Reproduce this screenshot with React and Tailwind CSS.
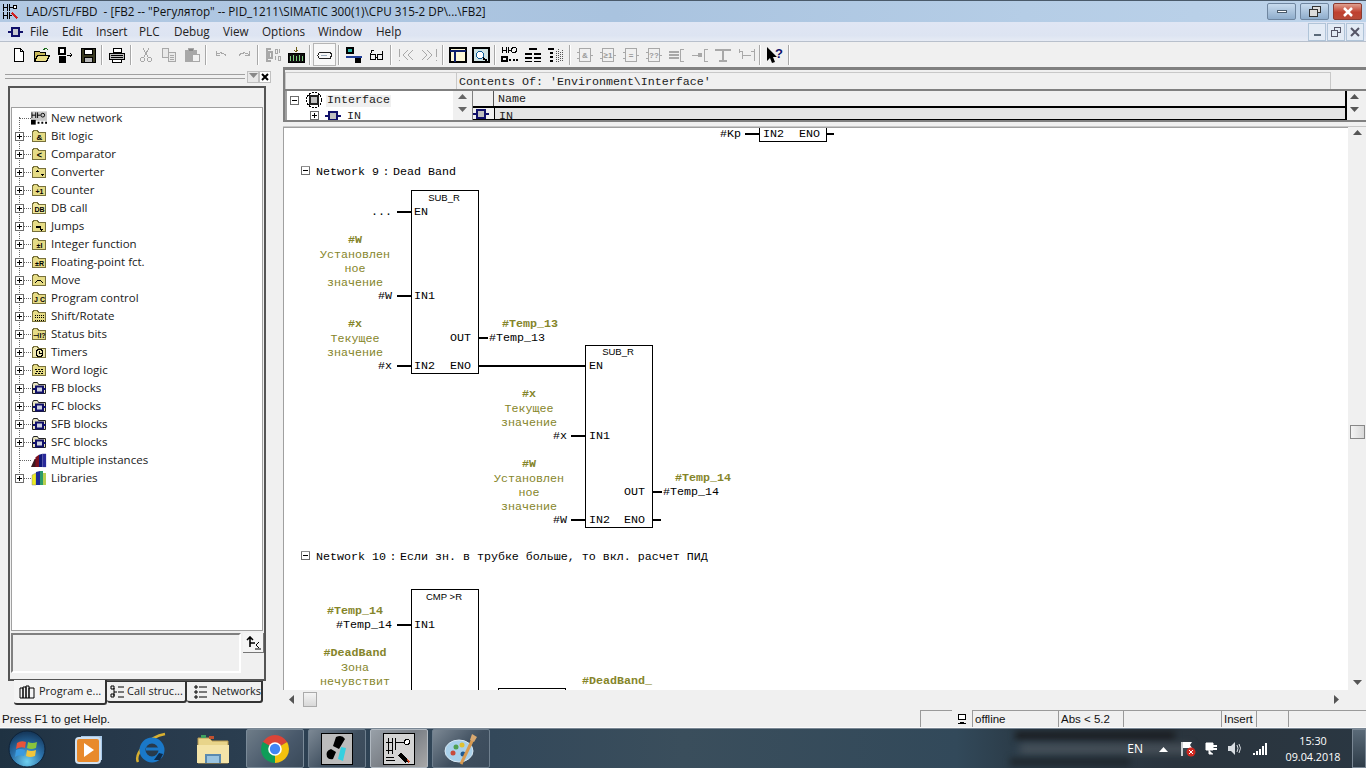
import clsx from 'clsx'

// --- small shared bits ---------------------------------------------------

const Plus = ({ minus }) => (
  <svg width="9" height="9" viewBox="0 0 9 9" className="relative shrink-0" shapeRendering="crispEdges">
    <rect x="0.5" y="0.5" width="8" height="8" fill="#fff" stroke="#6d6d6d" />
    <path d="M2 4.5h5" stroke="#000" />
    {!minus && <path d="M4.5 2v5" stroke="#000" />}
  </svg>
)

const Arrow = ({ dir, color = '#555' }) => {
  const d = {
    up: 'M0 6L4.5 1L9 6Z',
    down: 'M0 1L4.5 6L9 1Z',
    left: 'M6 0L1 4.5L6 9Z',
    right: 'M1 0L6 4.5L1 9Z',
  }[dir]
  return (
    <svg width="9" height="9" viewBox="0 0 9 9">
      <path d={d} fill={color} />
    </svg>
  )
}

// --- toolbar icons -------------------------------------------------------

const Ic = ({ children, dim }) => (
  <svg width="18" height="16" viewBox="0 0 18 16" fill="none" stroke={dim ? '#a8a8a8' : '#000'} strokeWidth="1" shapeRendering="crispEdges">
    {children}
  </svg>
)

const BoxGlyph = ({ label }) => (
  <Ic dim>
    <rect x="3.5" y="1.5" width="11" height="13" fill="#f0f0f0" />
    <path d="M1 5h2M1 11h2M15 8h2" />
    <text x="9" y="11" textAnchor="middle" fontSize="8" fill="#9a9a9a" stroke="none" fontFamily="Liberation Sans, sans-serif" fontWeight="700">{label}</text>
  </Ic>
)

const LadderGlyph = () => (
  <Ic>
    <path d="M1 3h4M1 0v6M5 0v6M7 0v6M7 3h3" />
    <circle cx="13" cy="3" r="2.5" />
    <path d="M1 10h5v4H1zM8 13h2M12 13h2M15 13h2" strokeWidth="2" />
  </Ic>
)

const TOOLBAR = [
  [
    <Ic key="new"><path d="M4.5 1.5h6l3 3v10h-9zM10.5 1.5v3h3" fill="#fff" /></Ic>,
    <Ic key="open"><path d="M1.5 14.5v-10h5l1 1h5v9z" fill="#c9b95a" /><path d="M1.5 14.5l3-6h12l-3 6z" fill="#e9dc85" /><path d="M10 3l3-2 2 2" stroke="#1a6a1a" /></Ic>,
    <Ic key="nodes"><rect x="3" y="1" width="6" height="6" fill="#fff" strokeWidth="2" /><rect x="3" y="9" width="6" height="6" fill="#000" /><path d="M11 8h5M14 6l2 2-2 2" /></Ic>,
    <Ic key="save"><rect x="2" y="1" width="14" height="14" fill="#3a3a20" /><rect x="5" y="2" width="8" height="5" fill="#fff" /><rect x="5" y="10" width="8" height="5" fill="#b9b9b9" /></Ic>,
  ],
  [
    <Ic key="print"><path d="M5 1.5h8v4H5z" fill="#fff" /><path d="M1.5 6.5h15v6h-15z" fill="#bdbdbd" /><path d="M3 8h12M3 10h12" /><path d="M4.5 12.5h9v3h-9z" fill="#fff" /></Ic>,
  ],
  [
    <Ic key="cut" dim><path d="M6 1l5 9M12 1l-5 9" /><circle cx="5.5" cy="12.5" r="2" /><circle cx="12.5" cy="12.5" r="2" /></Ic>,
    <Ic key="copy" dim><path d="M2.5 1.5h6v9h-6zM8.5 5.5h7v9h-7z" fill="#e9e9e9" /><path d="M10 8h4M10 10h4M10 12h4" /></Ic>,
    <Ic key="paste" dim><path d="M2 3h11v11H2z" fill="#a8a8a8" /><path d="M5 1h5v3H5z" fill="#888" /><path d="M9.5 7.5h7v7h-7z" fill="#f2f2f2" /></Ic>,
  ],
  [
    <Ic key="undo" dim><path d="M4 4v4h4M4 8c2-3 8-3 10 1" /></Ic>,
    <Ic key="redo" dim><path d="M14 4v4h-4M14 8c-2-3-8-3-10 1" /></Ic>,
  ],
  [
    <Ic key="compile" dim><path d="M7 2H3v12h4M5 5h3v6H5z" strokeWidth="1.5" /><path d="M11 2h2v4h-2zM15 2v4M11 9v4M14 9h2v4h-2z" /></Ic>,
    <Ic key="download"><path d="M9 0v5M7 3l2 2 2-2" stroke="#6b5a12" /><rect x="1" y="6" width="16" height="9" fill="#101010" /><path d="M3 9v5M6 8v6M9 9v5M12 8v6M15 9v5" stroke="#7fd07f" /></Ic>,
  ],
  [
    <Ic key="monitor"><path d="M3.5 5.5h11l1 2-1 4h-11l-2-3z" fill="#f7f7f7" stroke="#222" /><path d="M5 8h6" stroke="#9ab" /></Ic>,
  ],
  [
    <Ic key="tree"><rect x="2" y="1" width="6" height="5" fill="#2cb8a8" strokeWidth="1.5" /><path d="M1 10h16" strokeWidth="2" stroke="#22409a" /><rect x="10" y="11" width="5" height="4" fill="#000" /></Ic>,
    <Ic key="glasses"><circle cx="5" cy="10" r="3" /><circle cx="12" cy="10" r="3" /><path d="M8 10h1M2 9l2-6h2M14 8l1-4" /></Ic>,
  ],
  [
    <Ic key="prev" dim><path d="M2 2v8M2 13v1M11 3L6 8l5 5M16 3l-5 5 5 5" /></Ic>,
    <Ic key="next" dim><path d="M16 2v8M16 13v1M7 3l5 5-5 5M2 3l5 5-5 5" /></Ic>,
  ],
  [
    <Ic key="pane"><rect x="1" y="1" width="16" height="14" fill="#fdf8d8" strokeWidth="2" /><path d="M1 4h16M6 4v11" strokeWidth="2" stroke="#10206a" /></Ic>,
    <Ic key="zoom"><rect x="1" y="1" width="16" height="14" fill="#cfe3e3" strokeWidth="1.5" /><circle cx="8" cy="8" r="3.5" fill="#fff" stroke="#10609a" /><path d="M11 11l4 3" strokeWidth="2" /></Ic>,
  ],
  [
    <LadderGlyph key="net" />,
    <Ic key="ov1"><path d="M5 1h8v2H5zM1 6h7v2H1zM1 10h7v2H1zM1 14h7v1H1zM10 6h7v2h-7zM10 10h7v2h-7zM10 14h7v1h-7z" fill="#000" stroke="none" /></Ic>,
    <Ic key="ov2"><path d="M1 1h6v2H1zM3 5h3v2H3zM3 9h3v2H3zM3 13h3v2H3z" fill="#000" stroke="none" /><path d="M9 4v11M11 2v13M13 5v10M15 3v12" stroke="#555" strokeDasharray="1 1" /></Ic>,
  ],
  [
    <BoxGlyph key="and" label="&" />,
    <BoxGlyph key="or" label="≥1" />,
    <BoxGlyph key="eq" label="=" />,
    <BoxGlyph key="q" label="??" />,
    <Ic key="c1" dim><path d="M1 5h10M1 8h10M1 11h10" strokeWidth="1.5" /><path d="M16 2h-4v12h4" /></Ic>,
    <Ic key="c2" dim><path d="M1 8h7" /><circle cx="9" cy="8" r="2" fill="#a8a8a8" /><path d="M17 2h-4v12h4" /></Ic>,
    <Ic key="c3" dim><path d="M1 3h16M9 3v11M5 14h8" strokeWidth="2" /></Ic>,
    <Ic key="c4" dim><path d="M2 2v4M2 4h3v8M5 8h9M14 4h3M17 2v12" /></Ic>,
  ],
  [
    <svg key="help" width="18" height="16" viewBox="0 0 18 16">
      <path d="M1 0v14l3-3 2 5 3-1-2-5h4z" fill="#000" />
      <text x="13" y="11" fontSize="13" fontWeight="700" fill="#10106a" textAnchor="middle" fontFamily="Liberation Sans, sans-serif">?</text>
    </svg>,
  ],
]

// --- tree icons ----------------------------------------------------------

const Folder = ({ children, fill = '#e6dc86' }) => (
  <svg width="16" height="14" viewBox="0 0 16 14" className="shrink-0" shapeRendering="crispEdges">
    <path d="M1.5 3.5v9h13v-9h-7l-1-2h-4z" fill={fill} stroke="#77703a" />
    {children}
  </svg>
)

const Lbl = ({ t, size = 7 }) => (
  <text x="8.5" y="11" textAnchor="middle" fontSize={size} fontWeight="700" fill="#000" fontFamily="Liberation Sans, sans-serif">{t}</text>
)

const BlockGlyph = () => (
  <>
    <path d="M1.5 3.5v9h13v-9h-7l-1-2h-4z" fill="#e8e4c0" stroke="#222" />
    <rect x="5" y="5.5" width="7" height="6" fill="#cfd2dd" stroke="#10106a" strokeWidth="2" />
    <path d="M2 8h3M12 8h3" stroke="#10106a" strokeWidth="2" />
  </>
)

const NetIcon = () => (
  <svg width="16" height="14" viewBox="0 0 17 14" className="shrink-0">
    <rect width="17" height="10" fill="#c9c9c9" />
    <path d="M1 4h4M1 1v6M5 1v6M7 1v6M7 4h3" stroke="#000" fill="none" />
    <circle cx="12.5" cy="4" r="2" fill="none" stroke="#000" />
    <rect x="0" y="9" width="5" height="5" fill="#000" />
    <path d="M7 12h2M11 12h2M15 12h2" stroke="#000" strokeWidth="2" />
  </svg>
)

const BooksIcon = () => (
  <svg width="16" height="16" viewBox="0 0 18 16" className="shrink-0">
    <path d="M0 16l4-9h3v9z" fill="#3a1a20" />
    <path d="M5 16V5l4-3v14z" fill="#7a1020" />
    <path d="M9 16V2l4-1v15z" fill="#10187a" />
    <path d="M13 16V1h4v15z" fill="#2a2a9a" />
  </svg>
)

const LibIcon = () => (
  <svg width="16" height="16" viewBox="0 0 16 16" className="shrink-0">
    <path d="M1 15V5l4-2v12z" fill="#ecec20" stroke="#888" strokeWidth="0.5" />
    <path d="M5 15V2l4-1v14z" fill="#1a2a9a" />
    <path d="M9 15V1h3v14z" fill="#2a9a6a" />
    <path d="M12 15V3h3v12z" fill="#b8d050" />
  </svg>
)

const TREE = [
  { label: 'New network', icon: <NetIcon />, leaf: true },
  { label: 'Bit logic', icon: <Folder><Lbl t="&" size={8} /></Folder> },
  { label: 'Comparator', icon: <Folder><Lbl t="<" size={9} /></Folder> },
  { label: 'Converter', icon: <Folder><path d="M4 7l2-2 2 2zM9 9h4l-2 2z" /></Folder> },
  { label: 'Counter', icon: <Folder><Lbl t="+1" /></Folder> },
  { label: 'DB call', icon: <Folder fill="#f0e9a0"><Lbl t="DB" /></Folder> },
  { label: 'Jumps', icon: <Folder><path d="M5 7h5v3h2l-2 2-2-2h1V9H5z" /></Folder> },
  { label: 'Integer function', icon: <Folder><Lbl t="±I" /></Folder> },
  { label: 'Floating-point fct.', icon: <Folder><Lbl t="±R" /></Folder> },
  { label: 'Move', icon: <Folder><path d="M4 10q4-5 8 0" fill="none" stroke="#000" /></Folder> },
  { label: 'Program control', icon: <Folder><Lbl t="J C" /></Folder> },
  { label: 'Shift/Rotate', icon: <Folder><path d="M4 6h9M4 8h9M4 11h9" stroke="#000" strokeDasharray="1 1" /></Folder> },
  { label: 'Status bits', icon: <Folder><Lbl t="⊣I?" /></Folder> },
  { label: 'Timers', icon: <Folder fill="#efe8b0"><circle cx="8.5" cy="8" r="3.5" fill="none" stroke="#000" /><path d="M8.5 6v2h2" stroke="#000" fill="none" /></Folder> },
  { label: 'Word logic', icon: <Folder><path d="M4 6h9M5 8h7M4 10h9" stroke="#000" strokeDasharray="2 1" /></Folder> },
  { label: 'FB blocks', icon: <svg width="16" height="14" viewBox="0 0 16 14" className="shrink-0"><BlockGlyph /></svg> },
  { label: 'FC blocks', icon: <svg width="16" height="14" viewBox="0 0 16 14" className="shrink-0"><BlockGlyph /></svg> },
  { label: 'SFB blocks', icon: <svg width="16" height="14" viewBox="0 0 16 14" className="shrink-0"><BlockGlyph /></svg> },
  { label: 'SFC blocks', icon: <svg width="16" height="14" viewBox="0 0 16 14" className="shrink-0"><BlockGlyph /></svg> },
  { label: 'Multiple instances', icon: <BooksIcon />, leaf: true },
  { label: 'Libraries', icon: <LibIcon /> },
]

const MENU = [
  { t: 'File', w: 'w-[32px]' },
  { t: 'Edit', w: 'w-[34px]' },
  { t: 'Insert', w: 'w-[43px]' },
  { t: 'PLC', w: 'w-[35px]' },
  { t: 'Debug', w: 'w-[49px]' },
  { t: 'View', w: 'w-[39px]' },
  { t: 'Options', w: 'w-[56px]' },
  { t: 'Window', w: 'w-[58px]' },
  { t: 'Help', w: 'w-[40px]' },
]

// --- diagram data, screen coordinates ------------------------------------

const ORIGIN_X = 284
const ORIGIN_Y = 128

const BOXES = [
  [759, 120, 67, 21],
  [411, 190, 67, 183],
  [585, 345, 67, 182],
  [411, 589, 67, 160],
  [498, 688, 67, 60],
]

const WIRES = [
  [745, 134, 759], [826, 134, 834],
  [397, 212, 411], [397, 296, 411], [397, 366, 411],
  [478, 338, 488], [478, 366, 585],
  [571, 436, 585], [571, 520, 585],
  [652, 492, 662], [652, 520, 661],
  [397, 625, 411],
]

// x, y (middle), anchor, kind, text
const LABELS = [
  [741, 134, 'r', 'pin', '#Kp'], [763, 134, 'l', 'pin', 'IN2'], [799, 134, 'l', 'pin', 'ENO'],
  [444, 198, 'c', 'title', 'SUB_R'],
  [392, 212, 'r', 'pin', '...'], [414, 212, 'l', 'pin', 'EN'],
  [355, 240, 'c', 'sym', '#W'], [355, 254, 'c', 'com', 'Установлен'], [355, 268, 'c', 'com', 'ное'], [355, 282, 'c', 'com', 'значение'],
  [392, 296, 'r', 'pin', '#W'], [414, 296, 'l', 'pin', 'IN1'],
  [355, 324, 'c', 'sym', '#x'], [355, 338, 'c', 'com', 'Текущее'], [355, 352, 'c', 'com', 'значение'],
  [392, 366, 'r', 'pin', '#x'], [414, 366, 'l', 'pin', 'IN2'],
  [450, 338, 'l', 'pin', 'OUT'], [450, 366, 'l', 'pin', 'ENO'],
  [489, 338, 'l', 'pin', '#Temp_13'], [502, 324, 'l', 'sym', '#Temp_13'],
  [618, 352, 'c', 'title', 'SUB_R'], [589, 366, 'l', 'pin', 'EN'],
  [529, 394, 'c', 'sym', '#x'], [529, 408, 'c', 'com', 'Текущее'], [529, 422, 'c', 'com', 'значение'],
  [567, 436, 'r', 'pin', '#x'], [589, 436, 'l', 'pin', 'IN1'],
  [529, 464, 'c', 'sym', '#W'], [529, 478, 'c', 'com', 'Установлен'], [529, 492, 'c', 'com', 'ное'], [529, 506, 'c', 'com', 'значение'],
  [567, 520, 'r', 'pin', '#W'], [589, 520, 'l', 'pin', 'IN2'],
  [624, 492, 'l', 'pin', 'OUT'], [624, 520, 'l', 'pin', 'ENO'],
  [663, 492, 'l', 'pin', '#Temp_14'], [675, 478, 'l', 'sym', '#Temp_14'],
  [444, 597, 'c', 'title', 'CMP >R'],
  [355, 611, 'c', 'sym', '#Temp_14'], [392, 625, 'r', 'pin', '#Temp_14'], [414, 625, 'l', 'pin', 'IN1'],
  [355, 653, 'c', 'sym', '#DeadBand'], [355, 667, 'c', 'com', 'Зона'], [355, 681, 'c', 'com', 'нечувствит'],
  [582, 681, 'l', 'sym', '#DeadBand_'],
]

// mono text sits a little high in its line box
const NUDGE = { title: 0, pin: 1, sym: 1, com: 2 }

const Label = ({ x, y, anchor, kind, text }) => (
  <div
    className={clsx(
      'absolute -translate-y-1/2 whitespace-pre leading-none',
      anchor === 'c' && '-translate-x-1/2',
      anchor === 'r' && '-translate-x-full',
      kind === 'title' ? "font-['Liberation_Sans',sans-serif] text-[9.5px] text-black" : "font-['Liberation_Mono',monospace] text-[11.67px]",
      kind === 'pin' && 'text-black',
      kind === 'com' && 'text-[#85852a]',
      kind === 'sym' && 'font-bold text-[#85852a]',
    )}
    style={{ left: x - ORIGIN_X, top: y - ORIGIN_Y + NUDGE[kind] }}
  >
    {text}
  </div>
)

const NetworkTitle = ({ y, name, text }) => (
  <div
    className="absolute flex -translate-y-1/2 items-center font-['Liberation_Mono',monospace] text-[11.67px] leading-none whitespace-pre text-black"
    style={{ left: 301 - ORIGIN_X, top: y - ORIGIN_Y }}
  >
    <Plus minus />
    <span className="relative top-[2px] ml-[6px]">{name}</span>
    <span className="relative top-[2px] mx-[3.5px]">:</span>
    <span className="relative top-[2px]">{text}</span>
  </div>
)

function Diagram() {
  return (
    <div className="relative flex-1 overflow-hidden border-t border-l border-[#a0a0a0] bg-white">
      <svg className="absolute inset-0" width="1064" height="563" shapeRendering="crispEdges">
        <g transform={`translate(${-ORIGIN_X} ${-ORIGIN_Y})`}>
          {BOXES.map(([x, y, w, h]) => (
            <rect key={`${x}-${y}`} x={x + 0.5} y={y + 0.5} width={w} height={h} fill="#fff" stroke="#000" />
          ))}
          {WIRES.map(([x1, y, x2]) => (
            <rect key={`${x1}-${y}`} x={x1} y={y - 1} width={x2 - x1} height="2" fill="#000" />
          ))}
        </g>
      </svg>
      {LABELS.map(([x, y, anchor, kind, text]) => (
        <Label key={`${x}-${y}-${text}`} x={x} y={y} anchor={anchor} kind={kind} text={text} />
      ))}
      <NetworkTitle y={171} name="Network 9" text="Dead Band" />
      <NetworkTitle y={556} name="Network 10" text="Если зн. в трубке больше, то вкл. расчет ПИД" />
    </div>
  )
}

// --- window chrome -------------------------------------------------------

function TitleBar() {
  return (
    <div className="flex h-[22px] shrink-0 items-center border-t border-[#4a5a6a] bg-[linear-gradient(90deg,#b2c9e3,#a9c3df_45%,#b5cde6_75%,#bdd3ea)] pl-[2px]">
      <svg width="18" height="16" viewBox="0 0 18 16" shapeRendering="crispEdges">
        <path d="M1 3h5M1 0v7M5 0v7M7 0v7M7 3h4M1 11h5M1 8v7M5 8v7M7 8v7M7 11h3" stroke="#000" fill="none" />
        <circle cx="13" cy="3" r="2" fill="#fff" stroke="#000" />
        <path d="M10 8l6 5-2 2-5-5z" fill="#d02020" />
      </svg>
      <span className="ml-[6px] font-['Open_Sans',sans-serif] text-[11.7px] whitespace-pre text-[#111]">{'LAD/STL/FBD  - [FB2 -- "Регулятор" -- PID_1211\\SIMATIC 300(1)\\CPU 315-2 DP\\...\\FB2]'}</span>
      <div className="ml-auto flex items-center gap-[4px] pr-[4px]">
        <div className="flex h-[17px] w-[29px] items-center justify-center rounded-[2px] border border-[#6f86a0] bg-[linear-gradient(#c8dbee,#8fadcc)]">
          <div className="h-[3px] w-[10px] border border-[#4a5a6a] bg-white" />
        </div>
        <div className="flex h-[17px] w-[29px] items-center justify-center rounded-[2px] border border-[#6f86a0] bg-[linear-gradient(#c8dbee,#8fadcc)]">
          <svg width="12" height="11" viewBox="0 0 12 11" shapeRendering="crispEdges"><path d="M3.5 3V.5h8v6H9M.5 3.5h8v7h-8z" fill="#ddd" stroke="#333" /></svg>
        </div>
        <div className="flex h-[17px] w-[29px] items-center justify-center rounded-[2px] border border-[#8a3a30] bg-[linear-gradient(#e0a090,#c0402f_55%,#b84a38)]">
          <svg width="12" height="10" viewBox="0 0 12 10"><path d="M2 1l8 8M10 1l-8 8" stroke="#fff" strokeWidth="2.5" /></svg>
        </div>
      </div>
    </div>
  )
}

function MenuBar() {
  const cell = 'flex h-[18px] w-[18px] items-center justify-center border border-[#b0c4d8] bg-[#e3ebf5]'
  return (
    <div className="flex h-[20px] shrink-0 items-center border-b border-[#b8c0cc] bg-[linear-gradient(#e0e6f4,#dde4f2_70%,#e6ebf5)] pl-[8px] font-['Open_Sans',sans-serif] text-[11.7px] text-[#222]">
      <svg width="15" height="10" viewBox="0 0 15 10" className="mr-[7px]" shapeRendering="crispEdges">
        <rect x="4" y="1" width="7" height="8" fill="#c8cad0" stroke="#10106a" strokeWidth="2" />
        <path d="M0 5h3M12 5h3" stroke="#10106a" strokeWidth="2" />
      </svg>
      {MENU.map(m => (
        <span key={m.t} className={m.w}>{m.t}</span>
      ))}
      <div className="ml-auto flex gap-[1px] pr-[2px]">
        <div className={cell}><div className="mt-[6px] h-[2px] w-[7px] bg-[#5a6a7a]" /></div>
        <div className={cell}>
          <svg width="10" height="10" viewBox="0 0 10 10" shapeRendering="crispEdges"><path d="M3.5 2.5V.5h6v5H7M.5 3.5h6v6h-6z" fill="none" stroke="#556" /></svg>
        </div>
        <div className={cell}>
          <svg width="10" height="10" viewBox="0 0 10 10"><path d="M1 1l8 8M9 1l-8 8" stroke="#556" strokeWidth="2" /></svg>
        </div>
      </div>
    </div>
  )
}

function Toolbar() {
  return (
    <div className="flex h-[25px] shrink-0 items-center bg-[#f0f0f0] pl-[7px]">
      {TOOLBAR.map((group, i) => (
        <div key={i} className="flex items-center">
          {group.map((icon, j) => (
            <div
              key={j}
              className={clsx(
                'flex h-[23px] w-[23px] items-center justify-center',
                i === 5 && 'border border-[#b5b5b5] bg-[#f8f8f8]',
              )}
            >
              {icon}
            </div>
          ))}
          <div className="mx-[2px] h-[20px] w-[2px] border-r border-l border-r-white border-l-[#a8a8a8]" />
        </div>
      ))}
    </div>
  )
}

// --- left pane -----------------------------------------------------------

function TreeRow({ item }) {
  return (
    <div className="relative flex h-[18px] items-center">
      <div
        className={clsx(
          'absolute top-[9px] border-t border-dotted border-[#666]',
          item.leaf ? 'left-[7px] w-[12px]' : 'left-[12px] w-[7px]',
        )}
      />
      <div className="flex w-[12px] justify-end">
        {!item.leaf && <Plus />}
      </div>
      <div className="relative flex w-[26px] items-center justify-end pr-[3px]">{item.icon}</div>
      <span className="pl-[1px] whitespace-nowrap">{item.label}</span>
    </div>
  )
}

function LeftPane() {
  return (
    <aside className="flex w-[272px] shrink-0 flex-col">
      <div className="flex h-[19px] shrink-0 items-center pl-[5px]">
        <div className="h-[5px] w-[240px] border-y border-[#a0a0a0]" />
        <div className="ml-[2px] flex h-[12px] w-[12px] items-center justify-center border border-[#c0c0c0] bg-[#e8e8e8]">
          <Arrow dir="down" color="#888" />
        </div>
        <div className="flex h-[12px] w-[12px] items-center justify-center border border-[#c0c0c0] bg-white">
          <svg width="8" height="8" viewBox="0 0 8 8"><path d="M1 1l6 6M7 1l-6 6" stroke="#000" strokeWidth="2" /></svg>
        </div>
      </div>
      <div className="ml-[8px] flex h-[595px] w-[258px] shrink-0 flex-col border-2 border-[#555]">
        <div className="h-[19px] shrink-0 bg-[#f0f0f0]" />
        <div className="relative mx-[1px] flex-1 border border-[#a0a0a0] bg-white pt-[1px] font-['Open_Sans',sans-serif] text-[11.5px] text-[#1a1a1a]">
          <div className="absolute top-[9px] left-[7px] h-[360px] border-l border-dotted border-[#666]" />
          {TREE.map(item => <TreeRow key={item.label} item={item} />)}
        </div>
        <div className="flex h-[48px] shrink-0 items-start bg-[#f0f0f0] pt-[2px] pl-[1px]">
          <div className="h-[40px] w-[231px] border-2 border-r-white border-b-white border-t-[#808080] border-l-[#808080]" />
          <div className="ml-[2px] flex h-[20px] w-[21px] items-center justify-center border-r border-b border-[#777] bg-[#f4f4f4]">
            <svg width="17" height="14" viewBox="0 0 17 14">
              <path d="M5 1v10M2 4l3-3 3 3M5 7h5" stroke="#000" strokeWidth="1.6" fill="none" />
              <path d="M14 6l-3 3 3 3M10 13h6" stroke="#000" fill="none" />
            </svg>
          </div>
        </div>
      </div>
      <div className="flex h-[27px] shrink-0 pl-[14px] font-['Open_Sans',sans-serif] text-[11px] whitespace-nowrap text-[#222]">
        <div className="-mt-[1px] flex h-[25px] w-[93px] items-center gap-[4px] rounded-b-[3px] border-r-2 border-b-2 border-[#333] bg-[#f4f4f4] pl-[5px]">
          <svg width="16" height="14" viewBox="0 0 16 14" fill="none" stroke="#000" className="shrink-0"><path d="M1 3h3v10H1zM4 2h3v11H4zM7 1h3v12H7zM10 3h5v10h-5z" /></svg>
          Program e...
        </div>
        <div className="flex h-[22px] w-[80px] items-center gap-[2px] rounded-b-[3px] border-t border-r-2 border-b-2 border-[#333] pl-[3px]">
          <svg width="15" height="14" viewBox="0 0 15 14" fill="none" stroke="#000" className="shrink-0"><path d="M1 1h3v3H1zM4 3v8M4 7h3M1 9h3v3H1zM8 2h6M8 7h6M8 12h6" /></svg>
          Call struc...
        </div>
        <div className="flex h-[22px] w-[76px] items-center gap-[4px] rounded-b-[3px] border-t border-r-2 border-b-2 border-[#333] pl-[7px]">
          <svg width="14" height="14" viewBox="0 0 14 14" fill="none" stroke="#000" className="shrink-0"><path d="M1 1h2v2H1zM1 6h2v2H1zM1 11h2v2H1zM5 2h8M5 7h8M5 12h8" /></svg>
          Networks
        </div>
      </div>
    </aside>
  )
}

// --- right pane ----------------------------------------------------------

function InterfacePanel() {
  const mono = "font-['Liberation_Mono',monospace] text-[11.67px] leading-none text-[#222]"
  const portIcon = (
    <svg width="16" height="10" viewBox="0 0 16 10" className="shrink-0" shapeRendering="crispEdges">
      <rect x="4" y="1" width="8" height="8" fill="#c0c0c0" stroke="#10106a" strokeWidth="2" />
      <path d="M0 5h3M12 5h4" stroke="#10106a" strokeWidth="2" />
    </svg>
  )
  return (
    <div className="flex h-[52px] shrink-0 flex-col overflow-hidden border-b-2 border-l-2 border-[#808080]">
      <div className="flex h-[19px] shrink-0 pt-[2px]">
        <div className="w-[171px] shrink-0 border-t border-l border-[#c8c8c8]" />
        <div className={clsx('flex w-[875px] shrink-0 items-center border-t border-r border-l border-[#c8c8c8] pt-[3px] pl-[2px]', mono)}>
          {"Contents Of: 'Environment\\Interface'"}
        </div>
      </div>
      <div className="flex min-h-0 flex-1 border-t-2 border-[#808080]">
        <div className="flex w-[186px] shrink-0 overflow-hidden border-l-2 border-[#a0a0a0] bg-white">
          <div className="flex-1 pt-[1px] pl-[3px]">
            <div className="flex h-[16px] items-center">
              <Plus minus />
              <svg width="18" height="18" viewBox="0 0 18 18" className="ml-[6px] shrink-0" shapeRendering="crispEdges">
                <circle cx="9" cy="9" r="7.5" fill="#fff" stroke="#000" strokeDasharray="2 1" />
                <rect x="5" y="5" width="8" height="8" fill="#c0c0c0" stroke="#222" strokeWidth="2" />
              </svg>
              <span className={clsx('relative top-[1px] ml-[3px] bg-[#f0f0f0] px-[1px]', mono)}>Interface</span>
            </div>
            <div className="flex h-[15px] items-center pl-[20px]">
              <Plus />
              <div className="ml-[6px]">{portIcon}</div>
              <span className={clsx('relative top-[1px] ml-[6px]', mono)}>IN</span>
            </div>
          </div>
          <div className="flex w-[18px] shrink-0 flex-col items-center gap-[4px] bg-[#f0f0f0] pt-[2px]">
            <Arrow dir="up" color="#666" />
            <Arrow dir="down" color="#666" />
          </div>
        </div>
        <div className="ml-[1px] flex w-[873px] shrink-0 flex-col border-l border-[#808080]">
          <div className={clsx('flex h-[17px] shrink-0 border-b-2 border-black', mono)}>
            <div className="w-[21px] shrink-0 border-r border-[#555]" />
            <div className="flex items-center pt-[2px] pl-[4px]">Name</div>
          </div>
          <div className={clsx('flex h-[12px] shrink-0 overflow-hidden border-b border-black', mono)}>
            <div className="flex w-[21px] shrink-0 items-center">{portIcon}</div>
            <div className="h-full flex-1 border-l border-black bg-[#e4e4e4] pt-[3px] pl-[4px]">IN</div>
          </div>
        </div>
        <div className="flex w-[17px] shrink-0 flex-col items-center gap-[4px] border-l-2 border-black pt-[2px]">
          <Arrow dir="up" color="#555" />
          <Arrow dir="down" color="#555" />
        </div>
      </div>
    </div>
  )
}

function RightPane() {
  return (
    <main className="ml-[11px] flex min-w-0 flex-1 flex-col">
      <div className="h-[3px] shrink-0 bg-[#808080]" />
      <InterfacePanel />
      <div className="h-[5px] shrink-0 border-b border-[#c8c8c8]" />
      <div className="flex min-h-0 flex-1">
        <Diagram />
        <div className="flex w-[18px] shrink-0 flex-col items-center bg-[#f0f0f0] pt-[2px] pb-[2px]">
          <Arrow dir="up" />
          <div className="mt-[287px] h-[14px] w-[15px] border border-[#888] bg-[linear-gradient(90deg,#f4f4f4,#d8d8d8)]" />
          <div className="mt-auto"><Arrow dir="down" /></div>
        </div>
      </div>
      <div className="flex h-[18px] shrink-0 items-center bg-[#f0f0f0] pl-[5px]">
        <Arrow dir="left" />
        <div className="ml-[6px] h-[15px] w-[14px] border border-[#aaa] bg-[linear-gradient(#f4f4f4,#d8d8d8)]" />
        <div className="mr-[24px] ml-auto"><Arrow dir="right" /></div>
      </div>
    </main>
  )
}

// --- status and task bar -------------------------------------------------

function StatusBar() {
  const cell = 'flex h-[17px] shrink-0 items-center border-t border-l border-[#9a9a9a] pt-[1px] pl-[2px]'
  return (
    <div className="flex h-[20px] shrink-0 items-end border-b border-[#fafafa] bg-[#f0f0f0] font-['Liberation_Sans',sans-serif] text-[11.5px] text-[#111]">
      <span className="h-[17px] w-[920px] shrink-0 pt-[1px] pl-[2px]">Press F1 to get Help.</span>
      <div className={clsx(cell, 'w-[32px]')} />
      <div className="flex h-[17px] w-[20px] shrink-0 items-center justify-center">
        <svg width="10" height="11" viewBox="0 0 10 11" shapeRendering="crispEdges"><path d="M1.5 1.5h7v5h-7zM3 9h4" fill="#fff" stroke="#000" /><path d="M1 10h8" stroke="#000" /></svg>
      </div>
      <div className={clsx(cell, 'w-[86px]')}>offline</div>
      <div className={clsx(cell, 'w-[65px]')}>Abs &lt; 5.2</div>
      <div className={clsx(cell, 'w-[98px]')} />
      <div className={clsx(cell, 'w-[35px]')}>Insert</div>
      <div className={clsx(cell, 'w-[32px]')} />
      <div className={clsx(cell, 'flex-1')} />
    </div>
  )
}

const StartOrb = () => (
  <svg width="38" height="38" viewBox="0 0 38 38">
    <defs>
      <radialGradient id="orb" cx="50%" cy="85%" r="80%">
        <stop offset="0" stopColor="#6fd0f0" />
        <stop offset="0.55" stopColor="#2a6fa8" />
        <stop offset="1" stopColor="#163a5e" />
      </radialGradient>
    </defs>
    <circle cx="19" cy="19" r="18" fill="url(#orb)" stroke="#0e2238" />
    <path d="M9 13q4-3 9-1l-1 6q-4-2-9 1z" fill="#e8533a" />
    <path d="M20 12q4 2 9 0l-1 6q-5 2-9 0z" fill="#8ac43c" />
    <path d="M8 20q4-2 9 0l-1 6q-5-2-9 1z" fill="#3a9ae0" />
    <path d="M19 20q4 2 9 0l-1 6q-5 2-9 0z" fill="#f2c53a" />
  </svg>
)

const TASK_ICONS = [
  {
    key: 'media',
    node: (
      <svg width="28" height="30" viewBox="0 0 28 30">
        <rect x="6" y="2" width="21" height="24" fill="#a8c8e8" />
        <rect x="1" y="4" width="24" height="25" rx="3" fill="#e88a2c" stroke="#cfe0f0" strokeWidth="2" />
        <path d="M9 9l10 7-10 7z" fill="#fff" />
      </svg>
    ),
  },
  {
    key: 'ie',
    node: (
      <svg width="34" height="34" viewBox="0 0 34 34">
        <path d="M4 30C0 22 14 5 31 2" fill="none" stroke="#d8b030" strokeWidth="2.5" />
        <circle cx="18" cy="18" r="9.5" fill="none" stroke="#1a78c8" strokeWidth="6" />
        <path d="M12 17h13" stroke="#1a78c8" strokeWidth="3" />
        <path d="M25 21l4 1-3 6-6 0z" fill="#0d2a4a" />
      </svg>
    ),
  },
  {
    key: 'files',
    node: (
      <svg width="34" height="32" viewBox="0 0 34 32">
        <path d="M2 5h11l3 3h16v22H2z" fill="#e8d48a" stroke="#b89a50" />
        <rect x="5" y="2" width="5" height="3" fill="#40a060" />
        <rect x="13" y="3" width="5" height="3" fill="#c05030" />
        <path d="M1 12h32v18H1z" fill="#f4e4a8" />
        <path d="M10 30V22h14v8" fill="#9ac4e0" stroke="#5a8ab0" strokeWidth="2" />
      </svg>
    ),
  },
  {
    key: 'chrome',
    box: 'hot',
    node: (
      <svg width="32" height="32" viewBox="0 0 32 32">
        <path d="M16 16L3.88 9A14 14 0 0 1 28.12 9Z" fill="#db4437" />
        <path d="M16 16L28.12 9A14 14 0 0 1 16 30Z" fill="#f4c20d" />
        <path d="M16 16L16 30A14 14 0 0 1 3.88 9Z" fill="#0f9d58" />
        <circle cx="16" cy="16" r="6.8" fill="#fff" />
        <circle cx="16" cy="16" r="5.2" fill="#4285f4" />
      </svg>
    ),
  },
  {
    key: 'step7',
    box: 'on',
    node: (
      <svg width="32" height="32" viewBox="0 0 32 32">
        <rect x="0.5" y="0.5" width="31" height="31" fill="#bcbcbc" stroke="#000" />
        <path d="M15 4q6-3 9 2l-6 10-6-3zM6 24q-2-6 4-8l5 3-3 7q-4 1-6-2z" fill="#000" />
        <path d="M20 14l5 1-3 13-5-2z" fill="#35d0e0" />
      </svg>
    ),
  },
  {
    key: 'lad',
    box: 'active',
    node: (
      <svg width="32" height="32" viewBox="0 0 32 32" shapeRendering="crispEdges">
        <rect x="0.5" y="0.5" width="31" height="31" fill="#d4d4d4" stroke="#000" />
        <path d="M3 9h7M5 5v8M9 5v8M12 5v8M12 9h9M3 17h6M5 13v8M9 13v8M12 9v8M3 24h8M3 27h9" stroke="#000" fill="none" />
        <circle cx="24" cy="9" r="2.5" fill="#fff" stroke="#000" />
        <path d="M18 20l8 8-4 2-7-8z" fill="#000" />
        <path d="M24 26l3 2-2 2z" fill="#d04020" />
      </svg>
    ),
  },
  {
    key: 'paint',
    box: 'on',
    node: (
      <svg width="34" height="34" viewBox="0 0 34 34">
        <ellipse cx="15" cy="19" rx="14" ry="11" fill="#a9d0ea" stroke="#d8e8f4" />
        <circle cx="9" cy="21" r="2.5" fill="#c84a3a" />
        <circle cx="12" cy="15" r="2.5" fill="#50a050" />
        <circle cx="18" cy="13" r="2.5" fill="#e0c030" />
        <circle cx="19" cy="22" r="2.5" fill="#205a90" />
        <path d="M29 7L17 32" stroke="#d89a50" strokeWidth="3" />
        <path d="M26 8l2-6 5 3-3 5z" fill="#d8a870" />
      </svg>
    ),
  },
]

function TaskBar() {
  const boxes = {
    hot: 'border border-[#7a8a98] bg-[linear-gradient(135deg,#6e7c88,#48586a_60%,#3a4a5a)]',
    on: 'border border-[#6f7f8e] bg-[linear-gradient(135deg,#7c8894,#3f4f5f_55%,#3a4a5a)]',
    active: 'border border-[#b0b8c0] bg-[linear-gradient(135deg,#98a0a8,#7a7f86_50%,#a8a8a8)]',
  }
  return (
    <div className="relative flex h-[40px] shrink-0 items-center overflow-hidden border-t border-[#7a8794] bg-[linear-gradient(90deg,#1f3242,#26384a_8%,#33485a_36%,#3a4e5c_50%,#32495a_70%,#2c3d4a_74%,#2a343d_86%,#2a3742_100%)] text-white">
      <div className="absolute top-[2px] left-[1015px] h-[9px] w-[160px] bg-[#1c2024] blur-[3px]" />
      <div className="absolute top-[16px] left-[1020px] h-[8px] w-[170px] bg-[#4d565e] blur-[4px]" />
      <div className="absolute top-[29px] left-[1010px] h-[8px] w-[120px] bg-[#20282e] blur-[3px]" />
      <div className="relative flex w-[58px] shrink-0 justify-center pr-[4px]"><StartOrb /></div>
      {TASK_ICONS.map(t => (
        <div key={t.key} className="relative flex h-[39px] w-[62px] shrink-0 justify-center px-[2px]">
          <div className={clsx('flex h-full w-[58px] items-center justify-center rounded-[2px]', t.box && boxes[t.box])}>
            {t.node}
          </div>
        </div>
      ))}
      <div className="relative ml-auto flex h-full items-center font-['Open_Sans',sans-serif] text-[12px]">
        <span className="mr-[16px]">EN</span>
        <div className="mr-[12px]">
          <svg width="9" height="6" viewBox="0 0 9 6"><path d="M0 6l4.5-5L9 6z" fill="#fff" /></svg>
        </div>
        <svg width="16" height="16" viewBox="0 0 16 16" className="mr-[8px]">
          <path d="M2 1v14" stroke="#fff" strokeWidth="1.5" />
          <path d="M3 1h9l-2 3 2 3H3z" fill="#fff" />
          <circle cx="11" cy="11" r="4.5" fill="#d02820" />
          <path d="M9 9l4 4M13 9l-4 4" stroke="#fff" />
        </svg>
        <svg width="14" height="15" viewBox="0 0 14 15" className="mr-[10px]">
          <path d="M2 2h7v7H2zM5 9v4h4" fill="#fff" stroke="#fff" />
          <path d="M9 4h4v2H9zM9 7h4v2H9z" fill="#fff" />
        </svg>
        <svg width="14" height="13" viewBox="0 0 14 13" className="mr-[11px]">
          <path d="M0 4h3l4-4v13L3 9H0z" fill="#d8dde2" />
          <path d="M9 3q2 3 0 7M11 2q3 4 0 9" stroke="#d8dde2" fill="none" />
        </svg>
        <svg width="15" height="12" viewBox="0 0 15 12" className="mr-[10px]" shapeRendering="crispEdges">
          <path d="M0 10h2v2H0zM3 8h2v4H3zM6 6h2v6H6zM9 3h2v9H9zM12 0h2v12h-2z" fill="#fff" />
        </svg>
        <div className="flex w-[70px] flex-col items-center text-[10.8px] leading-[16px]">
          <span>15:30</span>
          <span>09.04.2018</span>
        </div>
        <div className="ml-[4px] h-[39px] w-[14px] border border-[#7a8794] bg-[linear-gradient(#5a6a78,#2e3c48)]" />
      </div>
    </div>
  )
}

export default function App() {
  return (
    <div className="flex h-[768px] w-[1366px] flex-col overflow-hidden bg-[#f0f0f0]">
      <TitleBar />
      <MenuBar />
      <Toolbar />
      <div className="flex min-h-0 flex-1">
        <LeftPane />
        <RightPane />
      </div>
      <StatusBar />
      <TaskBar />
    </div>
  )
}
